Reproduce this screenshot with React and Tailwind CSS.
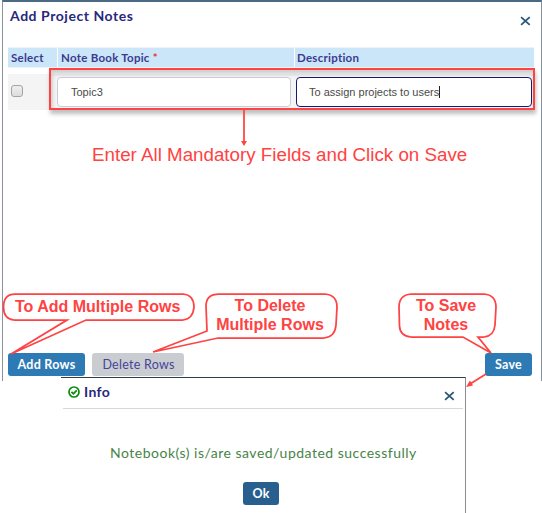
import React from "react";

function CloseIcon({ className }) {
  return (
    <svg viewBox="0 0 12 10" className={className} fill="none" stroke="#2b5878" strokeWidth="2">
      <path d="M1.2 0.8 L10.6 9.2 M10.6 0.8 L1.2 9.2" />
    </svg>
  );
}

function CheckBadge() {
  return (
    <svg viewBox="0 0 12 12" className="h-3 w-3" fill="none" stroke="#0a8a0a">
      <circle cx="6" cy="6" r="5" strokeWidth="1.7" />
      <path d="M3.4 5.9 L5.4 7.8 L8.8 4.4" strokeWidth="1.8" />
    </svg>
  );
}

function NotesTable() {
  return (
    <div className="mt-[17px] ml-[5px] w-[526px]">
      <div className="flex h-[21px] gap-px border-y border-[#eef3f8] text-[11.5px] leading-[19px] font-bold tracking-[0.26px] text-[#3b3b90]">
        <div className="w-[49px] bg-[#cce6f9] pl-[3px]">Select</div>
        <div className="w-[236px] bg-[#cce6f9] pl-[3px]">
          Note Book Topic <span className="text-[#f03030]">*</span>
        </div>
        <div className="flex-1 bg-[#cce6f9] pl-[2px]">Description</div>
      </div>
      <div className="mt-[6px] flex h-[36px] items-start bg-[#f4f4f4] pt-[3px] font-['Liberation_Sans',Arial,sans-serif] text-[11px] text-[#4a4a4a]">
        <div className="w-[49px] pt-[8px] pl-[3px]">
          <div className="h-[12px] w-[12px] rounded-[3px] border border-[#a4a4a4] bg-linear-to-b from-[#eeeeee] to-[#dddddd]" />
        </div>
        <div className="h-[30px] w-[234px] rounded-[4px] border border-[#ccccd8] bg-white pl-[13px] leading-[29px]">Topic3</div>
        <div className="ml-[5px] flex h-[30px] w-[236px] items-center rounded-[4px] border border-[#191970] bg-white pl-[12px]">
          <span>To assign projects to users</span>
          <span className="h-[12px] w-px bg-[#222]" />
        </div>
      </div>
    </div>
  );
}

function InfoDialog() {
  return (
    <div className="absolute top-[377px] left-[61px] flex h-[136px] w-[405px] flex-col border-t border-r border-t-[#2c3e4c] border-r-[#8d8d8d] bg-white">
      <div className="mx-[2px] flex h-[31px] items-start border-b border-[#d8d8d8]">
        <div className="mt-[8px] ml-[5px]"><CheckBadge /></div>
        <h2 className="mt-[5px] ml-[4px] text-[14px] leading-[18px] font-bold tracking-[0.4px] text-[#28287c]">Info</h2>
        <CloseIcon className="mt-[13px] mr-[8px] ml-auto h-[10px] w-[11px]" />
      </div>
      <p className="mt-[35px] pl-[49px] text-[14px] leading-[18px] tracking-[0.5px] whitespace-nowrap text-[#488348]">
        Notebook(s) is/are saved/updated successfully
      </p>
      <button className="mt-[20px] ml-[182px] h-[23px] w-[36px] rounded-[3px] bg-[#295f8e] text-[12.5px] leading-[23px] font-bold tracking-[0.2px] text-white">Ok</button>
    </div>
  );
}

function Annotations() {
  return (
    <div className="pointer-events-none absolute inset-0 font-['Liberation_Sans',Arial,sans-serif] text-[#ff4242]">
      <div className="absolute top-[68px] left-[49px] h-[42px] w-[486px] border-2 border-[#ff4242] shadow-[1px_4px_4px_rgba(0,0,0,0.25),inset_1px_4px_4px_rgba(0,0,0,0.2)]" />
      <svg viewBox="0 0 542 513" className="absolute inset-0 h-[513px] w-[542px]" fill="none" stroke="#ff4242" strokeWidth="1.75">
        <path d="M244 110 V142" />
        <path d="M241 141 H247 L244 146 Z" fill="#ff4242" stroke="none" />
        <path d="M67 320 H14 Q3.500 319 3.500 307 Q3.500 294 15 294 H183 Q194 295 194 307 Q193 319 183 320 H86 L11 354 Z" />
        <path d="M207 331 L206 306 Q206 294 219 294 H325 Q337 295 337 307 L336 325 Q335 337 324 338 H218 L153 352 Z" />
        <path d="M463 337 H411 Q400 336 399.500 326 L399 307 Q399 295 411 294 H484 Q496 295 496 307 L495 325 Q494 336 484 337 H478 L491 353 Z" />
        <path d="M486 374 L470 384" />
        <path d="M466 387 L470 380.500 L473 385.500 Z" fill="#ff4242" stroke="none" />
      </svg>
      <p className="absolute top-[145px] left-[92px] text-[18.75px] leading-[20px] whitespace-nowrap">Enter All Mandatory Fields and Click on Save</p>
      <p className="absolute top-[297px] left-[15px] text-[16px] leading-[19px] font-bold whitespace-nowrap">To Add Multiple Rows</p>
      <p className="absolute top-[296px] left-[206px] w-[128px] text-center text-[16px] leading-[19px] font-bold whitespace-nowrap">To Delete<br />Multiple Rows</p>
      <p className="absolute top-[296px] left-[398px] w-[96px] text-center text-[16px] leading-[19px] font-bold whitespace-nowrap">To Save<br />Notes</p>
    </div>
  );
}

export default function App() {
  return (
    <div className="relative h-[513px] w-[542px] overflow-hidden bg-white font-[Lato,sans-serif]">
      <div className="ml-[2px] flex h-[381px] flex-col border-t-2 border-r border-l border-t-[#4a6985] border-r-[#85929e] border-l-[#8a929a] bg-white">
        <header className="flex h-[28px] items-start justify-between pr-[10px] pl-[7px]">
          <h1 className="mt-[5px] text-[14px] leading-[18px] font-bold tracking-[0.55px] text-[#28287c]">Add Project Notes</h1>
          <CloseIcon className="mt-[14px] h-[10px] w-[11px]" />
        </header>
        <NotesTable />
        <footer className="mt-auto flex h-[28px] items-start pr-[9px] pl-[5px] text-[12.5px] leading-[24px] tracking-[0.25px]">
          <button className="h-[23px] w-[77px] rounded-[3px] bg-[#2e7ab5] font-bold text-white">Add Rows</button>
          <button className="ml-[7px] h-[23px] w-[92px] rounded-[3px] bg-[#c9ccd1] pl-[1px] text-[#44449a]">Delete Rows</button>
          <button className="ml-auto h-[23px] w-[47px] rounded-[3px] bg-[#2e7ab5] font-bold text-white">Save</button>
        </footer>
      </div>
      <InfoDialog />
      <Annotations />
    </div>
  );
}
